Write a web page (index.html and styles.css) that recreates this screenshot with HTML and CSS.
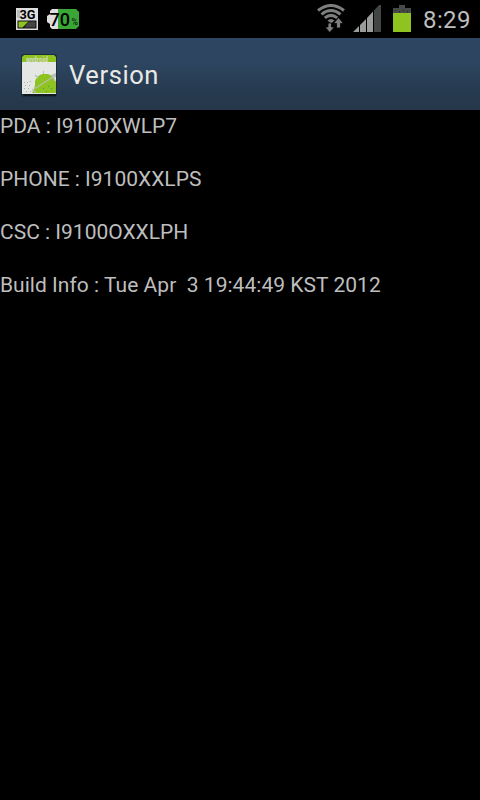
FILE: index.html
```html
<!DOCTYPE html>
<html lang="en">
<head>
<meta charset="utf-8">
<title>Version</title>
<link rel="stylesheet" href="styles.css">
</head>
<body>
<div class="status-bar">
  <svg class="icon-3g" width="22" height="22" viewBox="0 0 22 22">
    <rect width="22" height="22" fill="#dedede"/>
    <path d="M1 2h3v8H1z" fill="#bbb"/>
    <text class="label-3g" x="3.500" y="10.500" textLength="16" lengthAdjust="spacingAndGlyphs">3G</text>
    <rect x="1.500" y="12.500" width="19" height="8" fill="#111"/>
    <path d="M2.500 13.500h10l-6 6h-4z" fill="#8fc31f"/>
    <path d="M13 13.500h6.500v6H8z" fill="#444"/>
  </svg>
  <svg class="icon-percent" width="34" height="22" viewBox="0 0 34 22">
    <path d="M5 1H12V21H5L3 19V16L0 14V8L3 6V3Z" fill="#dedede"/>
    <path d="M11 1H29L32 4V18L29 21H11Z" fill="#3aa636"/>
    <text class="label-percent" x="2.500" y="18" textLength="20.500" lengthAdjust="spacingAndGlyphs">70</text>
    <text class="label-sign" x="24.500" y="16.500" textLength="6.500" lengthAdjust="spacingAndGlyphs">%</text>
  </svg>
  <svg class="icon-wifi" width="28" height="29" viewBox="0 0 28 29">
    <g fill="none" stroke="#7c7f7e" stroke-width="3">
      <path d="M1 6.500Q14 -3.500 27 6.500"/>
      <path d="M4.500 10.300Q14 2.700 23.500 10.300"/>
      <path d="M7.800 13.900Q14 8.900 20.200 13.900"/>
    </g>
    <path d="M10.500 16.500Q14 13.500 17.500 16.500L14 19.500Z" fill="#7c7f7e"/>
    <path d="M11 19h3.500v4h3l-4.800 5.500-4.700-5.500h3zM19.500 24v-4.500h-3l5-6 5 6h-3v4.500z" fill="#7c7f7e" stroke="#000" stroke-width=".8"/>
  </svg>
  <svg class="icon-signal" width="28" height="27" viewBox="0 0 28 27">
    <path d="M0 27L6 21V27ZM7 27V20L13 14V27ZM14 27V13L20 6.500V27Z" fill="#999c9b"/>
    <path d="M21 27V5.500L26 0H28V27Z" fill="#414644"/>
  </svg>
  <svg class="icon-battery" width="18" height="27" viewBox="0 0 18 27">
    <path d="M0 3h6V0h6v3h6v6H0z" fill="#454a47"/>
    <path d="M2 5h1v1H2zm4 1h1v1H6zm4-1h1v1h-1zm4 1h1v1h-1z" fill="#222"/>
    <rect y="8" width="18" height="19" fill="#8fc31f"/>
  </svg>
  <span class="clock">8:29</span>
</div>
<header class="title-bar">
  <svg class="app-icon" width="38" height="44" viewBox="0 0 38 44">
    <rect x="1" y="0" width="36" height="43" rx="3" fill="#1d2d3c"/>
    <path d="M4 1H34L36 3V9H2V3Z" fill="#8fc31f"/>
    <path d="M2 8H36V40H2Z" fill="#e5e7e5"/>
    <text class="icon-word" x="6" y="8" textLength="22" lengthAdjust="spacingAndGlyphs">android</text>
    <path d="M4 28h1v1H4zm3 0h1v1H7zm-2 3h1v1H5zm4 0h1v1H9zm-5 3h1v1H4zm4 0h1v1H8zm-2 3h1v1H6zm4 0h1v1h-1zm0-10h1v1h-1z" fill="#a9aea9"/>
    <path d="M15 31V27Q17 21 23 20H28Q34 22 36 28V39H12L14 35Z" fill="#8fc31f"/>
    <path d="M15 34.500L33 23M15 21l3 3M23.500 17v3M32 22l3 5M12 35l4 4" fill="none" stroke="#b9beb7" stroke-width="1.200"/>
    <path d="M31 21l5-2v4l-4 1z" fill="#b9beb7"/>
    <path d="M23 34h1v1h-1zm5-2h1v1h-1zm3 2h1v1h-1zm-5 3h1v1h-1z" fill="#3c9a5a"/>
    <path d="M3 40H36V42H4Z" fill="#101820"/>
  </svg>
  <h1 class="title">Version</h1>
</header>
<main class="versions">
  <p class="line pda">PDA : I9100XWLP7</p>
  <p class="line phone">PHONE : I9100XXLPS</p>
  <p class="line csc">CSC : I9100OXXLPH</p>
  <p class="line build">Build Info : Tue Apr  3 19:44:49 KST 2012</p>
</main>
</body>
</html>
```
FILE: styles.css
```css
* { box-sizing: border-box; }
body {
  margin: 0;
  width: 480px;
  height: 800px;
  overflow: hidden;
  background: #000;
  font-family: Roboto, "Liberation Sans", sans-serif;
}
.status-bar {
  display: flex;
  align-items: flex-start;
  height: 38px;
  padding-left: 16px;
}
.icon-3g { margin-top: 8px; }
.icon-percent { margin: 8px 0 0 9px; }
.icon-wifi { margin: 4px 0 0 236px; }
.icon-signal { margin: 5px 0 0 8px; }
.icon-battery { margin: 5px 0 0 12px; }
.label-3g { font-size: 12.5px; font-weight: 700; fill: #000; }
.label-percent { font-size: 19px; font-weight: 500; fill: #000; }
.label-sign { font-size: 9.5px; font-weight: 500; fill: #102810; }
.clock {
  margin-left: 12px;
  color: #bebebe;
  font-size: 24px;
  line-height: 40px;
  letter-spacing: 0.4px;
}
.title-bar {
  display: flex;
  align-items: center;
  height: 72px;
  padding-left: 20px;
  background: linear-gradient(#2e4563 0, #2d4560 35%, #263a4f 75%, #25384a 100%);
}
.app-icon { margin-top: 3px; }
.icon-word { font-size: 8px; font-weight: 700; fill: #d4d8cc; }
.title {
  margin: 1px 0 0 11px;
  color: #e9e9e6;
  font-size: 25.5px;
  font-weight: 400;
  line-height: 30px;
  letter-spacing: 0.6px;
}
.versions { padding-top: 3px; }
.line {
  margin: 0 0 27px;
  color: #bebebe;
  font-size: 21px;
  line-height: 26px;
  white-space: pre;
}
.build { letter-spacing: 0.03px; }
```
